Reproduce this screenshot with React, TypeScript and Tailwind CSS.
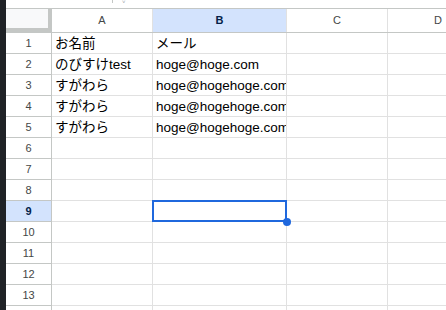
import React from 'react'

const cols = [
  { key: 'A', w: 'w-[101px]' },
  { key: 'B', w: 'w-[134px]' },
  { key: 'C', w: 'w-[101px]' },
  { key: 'D', w: 'flex-1' },
]

const data: Record<number, string[]> = {
  1: ['お名前', 'メール'],
  2: ['のびすけtest', 'hoge@hoge.com'],
  3: ['すがわら', 'hoge@hogehoge.com'],
  4: ['すがわら', 'hoge@hogehoge.com'],
  5: ['すがわら', 'hoge@hogehoge.com'],
}

const rows = Array.from({ length: 14 }, (_, i) => i + 1)

const App = () => {
  return (
    <div
      className="flex h-[310px] w-[446px] overflow-hidden bg-white"
      style={{ fontFamily: '"Liberation Sans", Arial, "Noto Sans CJK JP", sans-serif' }}
    >
      <div className="w-[6px] shrink-0 bg-[#1f2226]" />
      <div className="relative flex min-w-0 flex-1 flex-col">
        {/* top strip */}
        <div className="relative h-[9px] shrink-0 border-b border-[#c4c7c5] bg-white">
          <div className="absolute left-[106px] top-0 h-[3px] w-px bg-[#c4c7c5]" />
          <div className="absolute left-[116px] top-[-1px] text-[6px] leading-none text-[#9aa0a6]">˅</div>
        </div>

        {/* column header row */}
        <div className="flex h-[24px] shrink-0 border-b border-[#c4c7c5]">
          <div className="w-[46px] shrink-0 border-b-[4px] border-r-[4px] border-[#c4c7c5] bg-[#f8f9fa]" />
          {cols.map((c) => (
            <div
              key={c.key}
              className={`${c.w} ${c.key === 'D' ? '' : 'shrink-0 border-r border-[#e1e1e1]'} flex items-center justify-center text-[11px] ${
                c.key === 'B' ? 'bg-[#d3e3fd] font-bold text-[#041e49]' : 'bg-white text-[#444746]'
              } ${c.key === 'D' ? 'pl-[46px] justify-start' : ''}`}
            >
              {c.key}
            </div>
          ))}
        </div>

        {/* rows */}
        {rows.map((r) => (
          <div key={r} className="flex h-[21px] shrink-0">
            <div
              className={`flex w-[46px] shrink-0 items-center justify-center border-b border-r border-[#c4c7c5] text-[11px] ${
                r === 9 ? 'bg-[#d3e3fd] font-bold text-[#041e49]' : 'bg-white text-[#444746]'
              }`}
            >
              {r < 14 ? r : ''}
            </div>
            {cols.map((c, i) => (
              <div
                key={c.key}
                className={`${c.w} ${c.key === 'D' ? '' : 'shrink-0 border-r'} overflow-hidden whitespace-nowrap border-b border-[#e1e1e1] pl-[3px] pt-[1px] text-[13.5px] leading-[19px] text-black`}
              >
                {data[r]?.[i] ?? ''}
              </div>
            ))}
          </div>
        ))}

        {/* selection on B9 */}
        <div className="absolute left-[146px] top-[200px] h-[22px] w-[135px] border-2 border-[#1f68dd]" />
        <div className="absolute left-[277px] top-[218px] h-[8px] w-[8px] rounded-full bg-[#1f68dd]" />
      </div>
    </div>
  )
}

export default App
